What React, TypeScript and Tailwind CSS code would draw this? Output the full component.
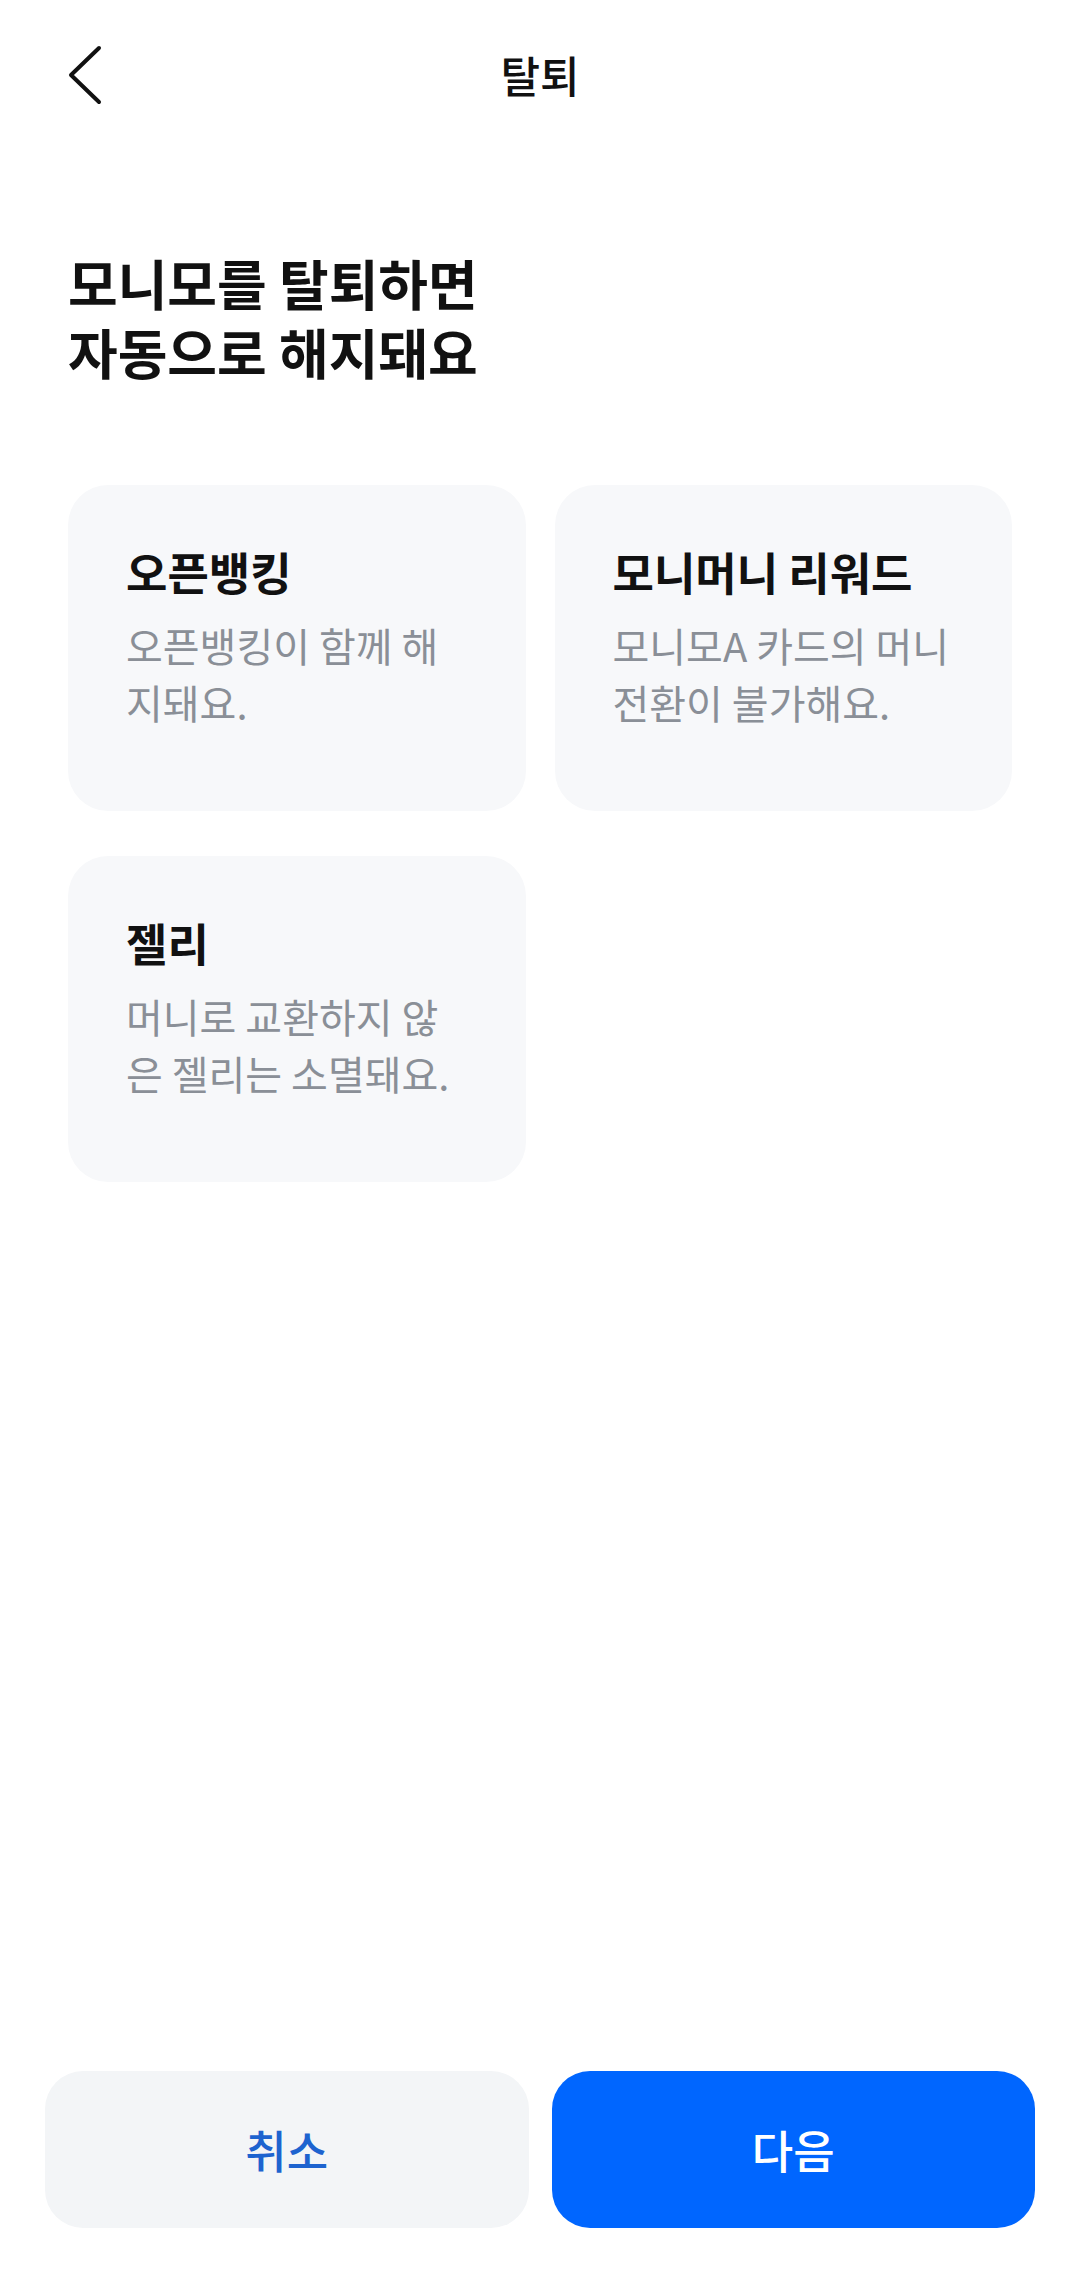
import { useState } from "react"

const items = [
  { title: "오픈뱅킹", lines: ["오픈뱅킹이 함께 해", "지돼요."] },
  { title: "모니머니 리워드", lines: ["모니모A 카드의 머니", "전환이 불가해요."] },
  { title: "젤리", lines: ["머니로 교환하지 않", "은 젤리는 소멸돼요."] },
]

function BackIcon() {
  return (
    <svg width="36" height="60" viewBox="0 0 36 60" fill="none">
      <polyline
        points="32,3 4,30 32,57"
        stroke="#111"
        strokeWidth="4"
        strokeLinecap="round"
        strokeLinejoin="round"
      />
    </svg>
  )
}

export default function App() {
  const [step] = useState(1)

  return (
    <div
      className="min-h-screen w-full bg-white flex flex-col text-[#111]"
      style={{ fontFamily: '"Noto Sans CJK KR", "Noto Sans", sans-serif' }}
      data-step={step}
    >
      {/* header */}
      <div className="relative h-[148px] flex items-center justify-center">
        <button className="absolute left-[67px] top-[45px]">
          <BackIcon />
        </button>
        <h1 className="text-[43px] font-medium leading-none">탈퇴</h1>
      </div>

      <div className="px-[68px] pt-[100px]">
        <h2 className="text-[54px] font-bold">
          <div className="h-[69px] leading-[69px] overflow-visible">모니모를 탈퇴하면</div>
          <div className="h-[69px] leading-[69px] overflow-visible">자동으로 해지돼요</div>
        </h2>

        <div className="grid grid-cols-2 gap-x-[29px] gap-y-[45px] mt-[99px]">
          {items.map((item) => (
            <div key={item.title} className="bg-[#f7f8fa] rounded-[40px] pl-[58px] pr-[16px] pt-[58px] pb-[80px]">
              <h3 className="text-[45px] font-bold leading-[58px] whitespace-nowrap">{item.title}</h3>
              <p className="mt-[16px] text-[40px] leading-[57px] text-[#8a8f97] whitespace-nowrap">
                {item.lines[0]}
                <br />
                {item.lines[1]}
              </p>
            </div>
          ))}
        </div>
      </div>

      <div className="flex-1" />

      {/* bottom buttons */}
      <div className="flex gap-[23px] px-[45px] pb-[45px]">
        <button className="flex-1 h-[157px] rounded-[38px] bg-[#f3f5f7] text-[45px] font-medium text-[#1d63cf]">
          취소
        </button>
        <button className="flex-1 h-[157px] rounded-[38px] bg-[#0066ff] text-[45px] font-medium text-white">
          다음
        </button>
      </div>
    </div>
  )
}
